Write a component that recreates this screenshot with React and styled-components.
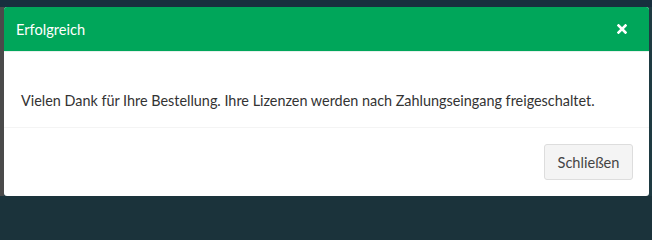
import React from 'react';
import styled, { createGlobalStyle } from 'styled-components';

const GlobalStyle = createGlobalStyle`
  html, body {
    margin: 0;
    padding: 0;
    background: #1b333b;
  }
  * { box-sizing: border-box; }
`;

const Backdrop = styled.div`
  width: 652px;
  height: 200px;
  padding: 7px 3px 4px 4px;
  background:
    linear-gradient(to bottom, #182f3e 0, #182f3e 7px, transparent 7px),
    linear-gradient(to bottom, transparent 0, transparent 196px, #1b333b 196px),
    linear-gradient(to right, #4a4a4a 0, #4a4a4a 4px, #1e3a42 4px);
`;

const Modal = styled.div`
  height: 189px;
  background: #fff;
  border-radius: 3px;
  overflow: hidden;
  display: flex;
  flex-direction: column;
  font-family: Lato, "Liberation Sans", sans-serif;
  color: #333;
`;

const Header = styled.div`
  height: 45px;
  flex: none;
  background: #00a65a;
  display: flex;
  align-items: center;
  justify-content: space-between;
  padding: 0 22px 0 12px;
  border-bottom: 1px solid #e8f0ec;
`;

const Title = styled.h4`
  margin: 0;
  font-size: 14.6px;
  font-weight: 400;
  color: #fff;
`;

const CloseButton = styled.button`
  border: 0;
  background: none;
  padding: 0;
  line-height: 1;
  cursor: pointer;
  display: flex;
`;

const Body = styled.div`
  height: 76px;
  flex: none;
  display: flex;
  align-items: center;
  padding: 22px 17px 0;
  font-size: 14.4px;
  white-space: nowrap;
  border-bottom: 1px solid #f4f4f4;
`;

const Footer = styled.div`
  flex: 1;
  display: flex;
  align-items: center;
  justify-content: flex-end;
  padding: 0 16px;
`;

const Button = styled.button`
  width: 89px;
  height: 36px;
  padding: 0;
  background: #f4f4f4;
  border: 1px solid #ddd;
  border-radius: 3px;
  color: #444;
  font-family: inherit;
  font-size: 14.6px;
  cursor: pointer;
`;

function CloseIcon() {
  return (
    <svg width="10" height="10" viewBox="0 0 10 10">
      <path d="M1.5 1.5 L8.5 8.5 M8.5 1.5 L1.5 8.5" stroke="#fff" strokeWidth="2.6" strokeLinecap="square" />
    </svg>
  );
}

export default function App() {
  return (
    <>
      <GlobalStyle />
      <Backdrop>
        <Modal>
          <Header>
            <Title>Erfolgreich</Title>
            <CloseButton aria-label="Schließen">
              <CloseIcon />
            </CloseButton>
          </Header>
          <Body>
            Vielen Dank für Ihre Bestellung. Ihre Lizenzen werden nach Zahlungseingang freigeschaltet.
          </Body>
          <Footer>
            <Button>Schließen</Button>
          </Footer>
        </Modal>
      </Backdrop>
    </>
  );
}
